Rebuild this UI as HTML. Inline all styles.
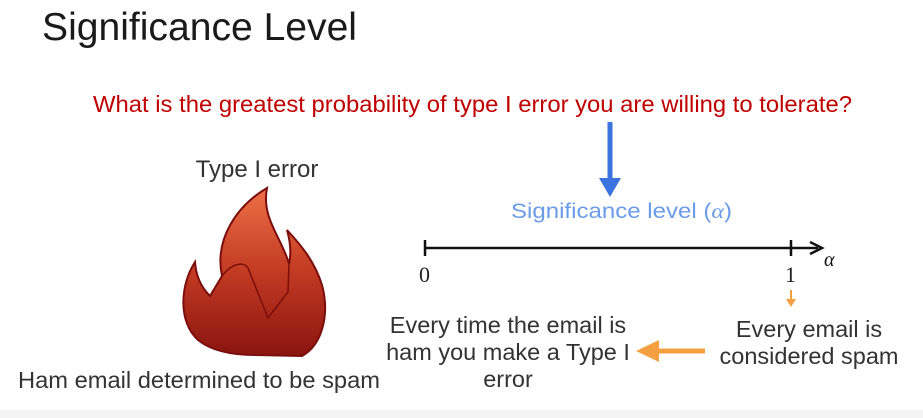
<!DOCTYPE html>
<html><head><meta charset="utf-8"><style>
html,body{margin:0;padding:0;background:#fff;}
svg{display:block;}
text{font-family:"Liberation Sans",Arial,sans-serif;}
</style></head><body>
<svg width="923" height="418" viewBox="0 0 923 418" xmlns="http://www.w3.org/2000/svg">
<defs>
<linearGradient id="fg" x1="0" y1="0" x2="0" y2="1">
<stop offset="0" stop-color="#ee7048"/><stop offset="0.5" stop-color="#c23a22"/><stop offset="1" stop-color="#8a1410"/>
</linearGradient>
</defs>
<rect width="923" height="418" fill="#fff"/>
<rect y="410" width="923" height="8" fill="#f4f4f4"/>
<text x="42" y="40" font-size="38.5" fill="#1a1a1a" textLength="315" lengthAdjust="spacingAndGlyphs">Significance Level</text>
<text x="93" y="112" font-size="23" fill="#c00000" textLength="759" lengthAdjust="spacingAndGlyphs">What is the greatest probability of  type I error you are willing to tolerate?</text>
<line x1="610" y1="122" x2="610" y2="180" stroke="#3b73e0" stroke-width="5"/>
<polygon points="599,178 621,178 610,197" fill="#3b73e0"/>
<text x="511" y="218" font-size="21" fill="#6a9be8" textLength="221" lengthAdjust="spacingAndGlyphs">Significance level (<tspan font-family="Liberation Serif" font-style="italic">α</tspan>)</text>
<line x1="425" y1="248" x2="818" y2="248" stroke="#111" stroke-width="2.5"/>
<line x1="425" y1="240" x2="425" y2="256" stroke="#111" stroke-width="2.5"/>
<line x1="791" y1="240" x2="791" y2="256" stroke="#111" stroke-width="2.5"/>
<polyline points="810,242 822,248 810,254" fill="none" stroke="#111" stroke-width="2.5"/>
<text x="824" y="266" font-size="20" font-style="italic" fill="#111" style="font-family:'Liberation Serif',serif">α</text>
<text x="419" y="282" font-size="22" fill="#222" style="font-family:'Liberation Serif',serif">0</text>
<text x="785" y="282" font-size="22" fill="#222" style="font-family:'Liberation Serif',serif">1</text>
<line x1="791" y1="290" x2="791" y2="303" stroke="#f5a040" stroke-width="2"/>
<polygon points="786,299 796,299 791,307" fill="#f5a040"/>
<text x="809" y="337" font-size="23.5" fill="#333" text-anchor="middle">Every email is</text>
<text x="809" y="364" font-size="23.5" fill="#333" text-anchor="middle">considered spam</text>
<line x1="705" y1="351" x2="656" y2="351" stroke="#f5a040" stroke-width="5"/>
<polygon points="636,351 659,340 659,362" fill="#f5a040"/>
<text x="508" y="333" font-size="23.5" fill="#333" text-anchor="middle">Every time the email is</text>
<text x="508" y="360" font-size="23.5" fill="#333" text-anchor="middle">ham you make a Type I</text>
<text x="508" y="387" font-size="23.5" fill="#333" text-anchor="middle">error</text>
<text x="257" y="177" font-size="24" fill="#333" text-anchor="middle">Type I error</text>
<path d="M267,188 C238,205 214,238 222,276 L210,296 C200,286 196,275 195,262 C180,285 178,322 198,340 C213,352 235,355 255,355 L302,356 C322,345 330,315 322,285 C315,262 301,245 287,230 C291,244 291,255 289,264 C282,238 261,218 267,188 Z" fill="url(#fg)" stroke="#7a0e0c" stroke-width="2"/>
<path d="M222,276 C233,262 244,262 248,268 L268,318 L288,292 L289,264" fill="none" stroke="#7a0e0c" stroke-width="1.5"/>
<text x="18" y="388" font-size="23.5" fill="#333" textLength="362" lengthAdjust="spacingAndGlyphs">Ham email determined to be spam</text>
</svg>
</body></html>
